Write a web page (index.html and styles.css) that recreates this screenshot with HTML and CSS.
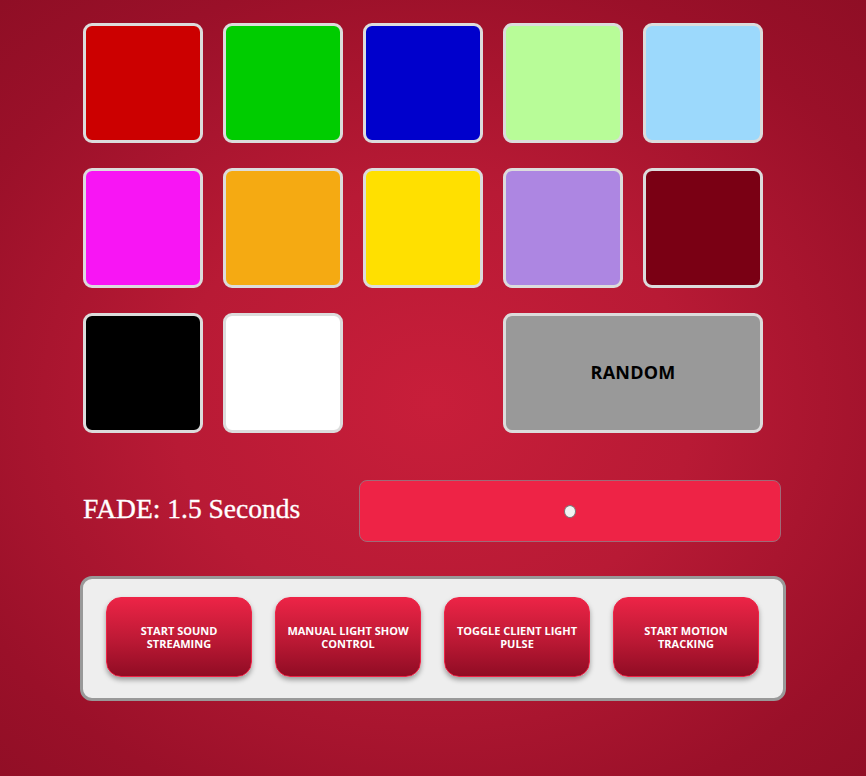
FILE: index.html
```html
<!DOCTYPE html>
<html>
<head>
<meta charset="utf-8">
<link rel="stylesheet" href="styles.css">
</head>
<body>
<div class="page">
  <div class="swatches">
    <div class="swatch red"></div>
    <div class="swatch green"></div>
    <div class="swatch blue"></div>
    <div class="swatch lime"></div>
    <div class="swatch sky"></div>
    <div class="swatch magenta"></div>
    <div class="swatch orange"></div>
    <div class="swatch yellow"></div>
    <div class="swatch lilac"></div>
    <div class="swatch maroon"></div>
    <div class="swatch black"></div>
    <div class="swatch white"></div>
    <div class="swatch random">RANDOM</div>
  </div>
  <div class="fade-row">
    <div class="fade-label">FADE: 1.5 Seconds</div>
    <div class="slider"><div class="thumb"></div></div>
  </div>
  <div class="panel">
    <div class="btn">START SOUND STREAMING</div>
    <div class="btn">MANUAL LIGHT SHOW CONTROL</div>
    <div class="btn">TOGGLE CLIENT LIGHT PULSE</div>
    <div class="btn">START MOTION TRACKING</div>
  </div>
</div>
</body>
</html>
```
FILE: styles.css
```css
html, body {
  margin: 0;
  height: 100%;
}
body {
  background: radial-gradient(ellipse 75% 70% at 50% 52%, #c81e3a 0%, #b81a35 40%, #9a1029 80%, #8f0e25 100%);
  background-attachment: fixed;
  font-family: "Open Sans", sans-serif;
}
.page {
  padding: 23px 0 0 83px;
}
.swatches {
  display: grid;
  grid-template-columns: repeat(5, 120px);
  grid-auto-rows: 120px;
  column-gap: 20px;
  row-gap: 25px;
}
.swatch {
  box-sizing: border-box;
  border: 3px solid #dcdcdc;
  border-radius: 9px;
}
.red { background: #cc0000; }
.green { background: #00cc00; }
.blue { background: #0000cc; }
.lime { background: #b8fc98; }
.sky { background: #9cd9fc; }
.magenta { background: #f815f4; }
.orange { background: #f5aa12; }
.yellow { background: #ffe000; }
.lilac { background: #ad86e2; }
.maroon { background: #7a0014; }
.black { background: #000000; }
.white { background: #ffffff; }
.random {
  grid-column: 4 / span 2;
  background: #999999;
  display: flex;
  align-items: center;
  justify-content: center;
  font-weight: 700;
  font-size: 18px;
  letter-spacing: 0.2px;
  color: #000;
  padding-bottom: 2px;
}
.fade-row {
  display: flex;
  align-items: center;
  margin-top: 47px;
}
.fade-label {
  font-family: "Liberation Serif", serif;
  font-size: 27.5px;
  -webkit-text-stroke: 0.35px #fff;
  color: #fff;
  width: 276px;
  margin-top: -5px;
}
.slider {
  box-sizing: border-box;
  width: 422px;
  height: 62px;
  background: #ee2346;
  border: 1px solid #a06a78;
  border-radius: 8px;
  display: flex;
  align-items: center;
  justify-content: center;
}
.thumb {
  width: 12px;
  height: 13px;
  border-radius: 50%;
  background: #f2f2f2;
  border: 1px solid #777;
  box-sizing: border-box;
  margin-top: 1px;
}
.panel {
  box-sizing: border-box;
  margin: 34px 0 0 -3px;
  width: 706px;
  height: 125px;
  background: #eeeeee;
  border: 3px solid #999999;
  border-radius: 12px;
  display: flex;
  gap: 23px;
  padding: 18px 0 0 23px;
}
.btn {
  box-sizing: border-box;
  width: 146px;
  height: 80px;
  border: 1px solid #ee2346;
  border-radius: 15px;
  background: linear-gradient(to bottom, #ec2446 0%, #c01a36 50%, #900c24 100%);
  box-shadow: 0 3px 5px rgba(0,0,0,0.35);
  color: #fff;
  font-weight: 700;
  font-size: 11px;
  line-height: 13px;
  text-align: center;
  display: flex;
  align-items: center;
  justify-content: center;
  padding: 0 10px 1px;
}
```
